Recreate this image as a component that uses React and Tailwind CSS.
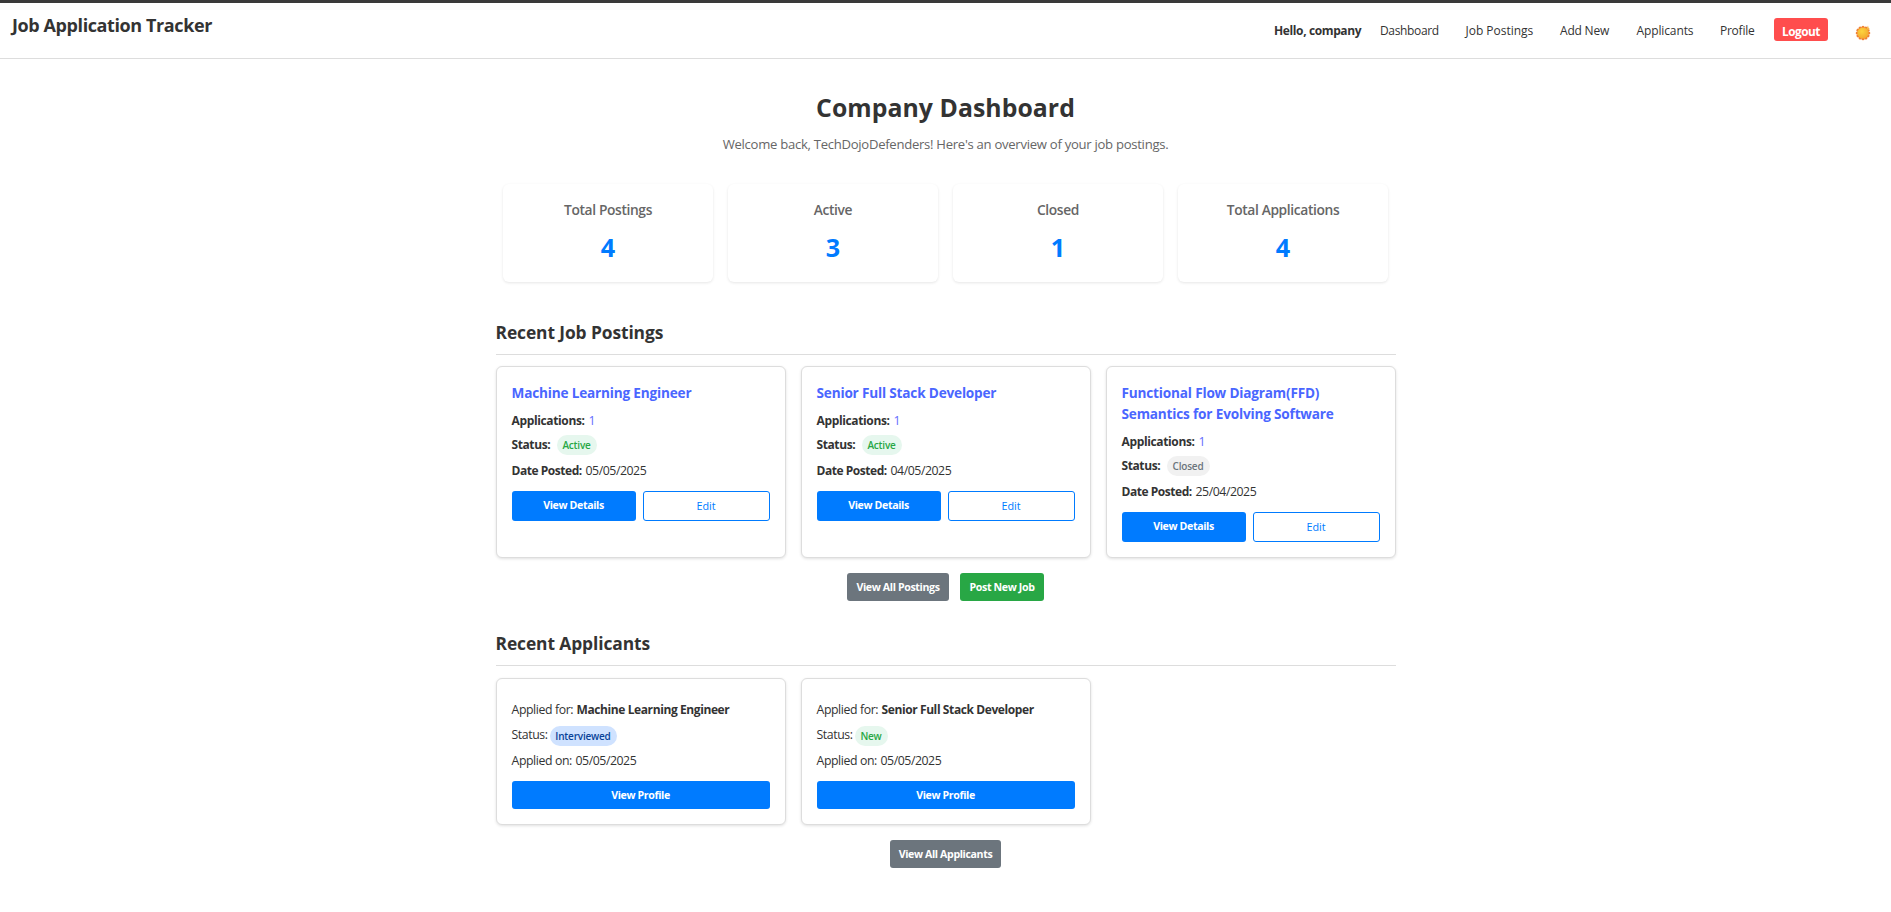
import React from "react";

const navLinks = [
  { label: "Dashboard", cls: "w-[59px] tracking-[-0.34px]" },
  { label: "Job Postings", cls: "w-[68px] tracking-[-0.02px]" },
  { label: "Add New", cls: "w-[50px] tracking-[-0.2px]" },
  { label: "Applicants", cls: "w-[57px] tracking-[-0.12px]" },
  { label: "Profile", cls: "w-[35px] tracking-[-0.25px]" },
];

const stats = [
  ["Total Postings", 4],
  ["Active", 3],
  ["Closed", 1],
  ["Total Applications", 4],
];

const jobs = [
  { title: "Machine Learning Engineer", status: "Active", date: "05/05/2025" },
  { title: "Senior Full Stack Developer", status: "Active", date: "04/05/2025" },
  {
    title: "Functional Flow Diagram(FFD) Semantics for Evolving Software",
    status: "Closed",
    date: "25/04/2025",
  },
];

const applicants = [
  { job: "Machine Learning Engineer", status: "Interviewed", date: "05/05/2025" },
  { job: "Senior Full Stack Developer", status: "New", date: "05/05/2025" },
];

const pillStyles = {
  Active: "w-10 bg-[#e6f7ee] text-[#28a745]",
  Closed: "w-[43px] bg-[#f1f1f1] text-[#6c757d]",
  Interviewed: "w-[67px] bg-[#cfe2ff] text-[#084298]",
  New: "w-[33px] bg-[#e6f7ee] text-[#28a745]",
};

function Pill({ status }) {
  return (
    <span
      className={`h-5 shrink-0 rounded-[10px] text-center text-[10px] leading-5 font-semibold tracking-[-0.2px] whitespace-nowrap ${pillStyles[status]}`}
    >
      {status}
    </span>
  );
}

function SunIcon() {
  const bumps = Array.from({ length: 12 }, (_, i) => {
    const a = (i * Math.PI) / 6;
    return [8 + 5.7 * Math.cos(a), 8 + 5.7 * Math.sin(a)];
  });
  return (
    <svg viewBox="0 0 16 16" className="size-4">
      <defs>
        <radialGradient id="sun" cx="0.4" cy="0.35" r="0.7">
          <stop offset="0" stopColor="#fcd53f" />
          <stop offset="1" stopColor="#f3a72c" />
        </radialGradient>
      </defs>
      {bumps.map(([x, y], i) => (
        <circle key={i} cx={x} cy={y} r="1.6" fill="#f08033" />
      ))}
      <path d="M11.6 3.6 13 .6l.6 2.2 1 .8-1.5 1.6z" fill="#f7b84a" />
      <circle cx="8" cy="8" r="5.6" fill="url(#sun)" />
    </svg>
  );
}

function SectionTitle({ children }) {
  return (
    <h2 className="border-b border-[#ddd] pb-2.5 text-[17.4px] leading-6 font-bold tracking-[-0.1px]">
      {children}
    </h2>
  );
}

const card = "rounded-md border border-[#ddd] bg-white p-[15px] shadow-[0_1px_3px_rgba(0,0,0,0.12)]";
const button =
  "h-7 rounded-[3px] text-center text-[10.6px] leading-7 font-bold tracking-[-0.36px] whitespace-nowrap text-white";

function JobCard({ title, status, date }) {
  return (
    <article className={card}>
      <h3 className="text-[13.6px] leading-[21px] font-bold tracking-[-0.18px] text-[#4a66ff]">{title}</h3>
      <p className="mt-2 flex h-5 text-[12.3px] leading-5">
        <strong className="w-[77px] text-xs leading-5 font-bold tracking-[-0.36px]">Applications:</strong>
        <span className="text-[#646cff]">1</span>
      </p>
      <p className="mt-1 flex h-5 text-[12.3px] leading-[19px]">
        <strong className="w-[45px] text-xs leading-[19px] font-bold tracking-[-0.4px]">Status:</strong>
        <Pill status={status} />
      </p>
      <p className="mt-1.5 flex h-5 text-[12.3px] leading-5">
        <strong className="w-[74px] text-xs leading-5 font-bold tracking-[-0.46px]">Date Posted:</strong>
        <span className="tracking-[-0.45px]">{date}</span>
      </p>
      <div className="mt-2.5 flex gap-[7px]">
        <button className="h-[30px] w-[124px] rounded-[3px] bg-[#007bff] pb-0.5 text-[10.6px] leading-7 font-bold tracking-[-0.37px] text-white">
          View Details
        </button>
        <button className="h-[30px] flex-1 rounded-[3px] border border-[#007bff] text-[10.8px] leading-7 font-medium text-[#007bff]">
          Edit
        </button>
      </div>
    </article>
  );
}

function ApplicantCard({ job, status, date }) {
  return (
    <article className={card}>
      <p className="mt-1.5 flex h-5 text-[12.3px] leading-5">
        <span className="w-[65px] tracking-[-0.4px]">Applied for:</span>
        <strong className="text-xs leading-5 font-bold tracking-[-0.4px]">{job}</strong>
      </p>
      <p className="mt-1.5 flex h-5 text-[12.3px] leading-[17px]">
        <span className="w-[38px] tracking-[-0.42px]">Status:</span>
        <Pill status={status} />
      </p>
      <p className="mt-[5px] flex h-5 text-[12.3px] leading-5">
        <span className="w-16 tracking-[-0.4px]">Applied on:</span>
        <span className="tracking-[-0.45px]">{date}</span>
      </p>
      <button className={`mt-2.5 block w-full bg-[#007bff] ${button}`}>View Profile</button>
    </article>
  );
}

export default function App() {
  return (
    <div className="min-h-screen bg-white font-['Open_Sans','Noto_Sans',sans-serif] text-[#333]">
      <div className="h-[3px] bg-[#3a3a3a]" />
      <header className="flex h-14 items-start justify-between border-b border-[#ddd] pr-5 pl-3">
        <div className="pt-[7px] text-[18px] leading-[30px] font-bold tracking-[-0.4px]">
          Job Application Tracker
        </div>
        <nav className="flex pt-[15px] text-xs leading-[26px] font-medium whitespace-nowrap">
          <span className="mr-[18px] w-[88px] font-bold tracking-[-0.38px]">Hello, company</span>
          <div className="flex gap-[26.5px]">
            {navLinks.map(({ label, cls }) => (
              <a key={label} className={cls}>
                {label}
              </a>
            ))}
          </div>
          <button className="ml-[19px] h-[23px] w-[54px] rounded-[3px] bg-[#ff4d4d] text-[11.8px] leading-[26px] font-bold tracking-[-0.5px] text-white">
            Logout
          </button>
          <span className="mt-[7px] ml-[27px]">
            <SunIcon />
          </span>
        </nav>
      </header>

      <main className="mx-auto w-[900px] pt-[33px]">
        <h1 className="text-center text-[24.8px] leading-[31px] font-bold tracking-[0.05px]">Company Dashboard</h1>
        <p className="mt-[11px] text-center text-[13.1px] leading-5 tracking-[-0.28px] text-[#666]">
          Welcome back, TechDojoDefenders! Here's an overview of your job postings.
        </p>

        <section className="mt-[30px] flex justify-center gap-[15px]">
          {stats.map(([label, value]) => (
            <div
              key={label}
              className="h-[98px] w-[210px] rounded-md bg-white pt-4 text-center shadow-[0_1px_3px_rgba(0,0,0,0.1)]"
            >
              <div className="text-[13.8px] leading-5 font-semibold tracking-[-0.37px] text-[#666]">{label}</div>
              <div className="mt-[11px] text-[25.2px] leading-8 font-bold text-[#007bff]">{value}</div>
            </div>
          ))}
        </section>

        <section className="mt-[38px]">
          <SectionTitle>Recent Job Postings</SectionTitle>
          <div className="mt-[11px] grid grid-cols-3 gap-[15px]">
            {jobs.map((job) => (
              <JobCard key={job.title} {...job} />
            ))}
          </div>
          <div className="mt-[15px] flex justify-center gap-[11px]">
            <button className={`w-[102px] bg-[#6c757d] ${button}`}>View All Postings</button>
            <button className={`w-[84px] bg-[#28a745] ${button}`}>Post New Job</button>
          </div>
        </section>

        <section className="mt-[30px]">
          <SectionTitle>Recent Applicants</SectionTitle>
          <div className="mt-3 grid grid-cols-3 gap-[15px]">
            {applicants.map((applicant) => (
              <ApplicantCard key={applicant.job} {...applicant} />
            ))}
          </div>
          <div className="mt-[15px] flex justify-center">
            <button className={`w-[111px] bg-[#6c757d] ${button}`}>View All Applicants</button>
          </div>
        </section>
      </main>
    </div>
  );
}
